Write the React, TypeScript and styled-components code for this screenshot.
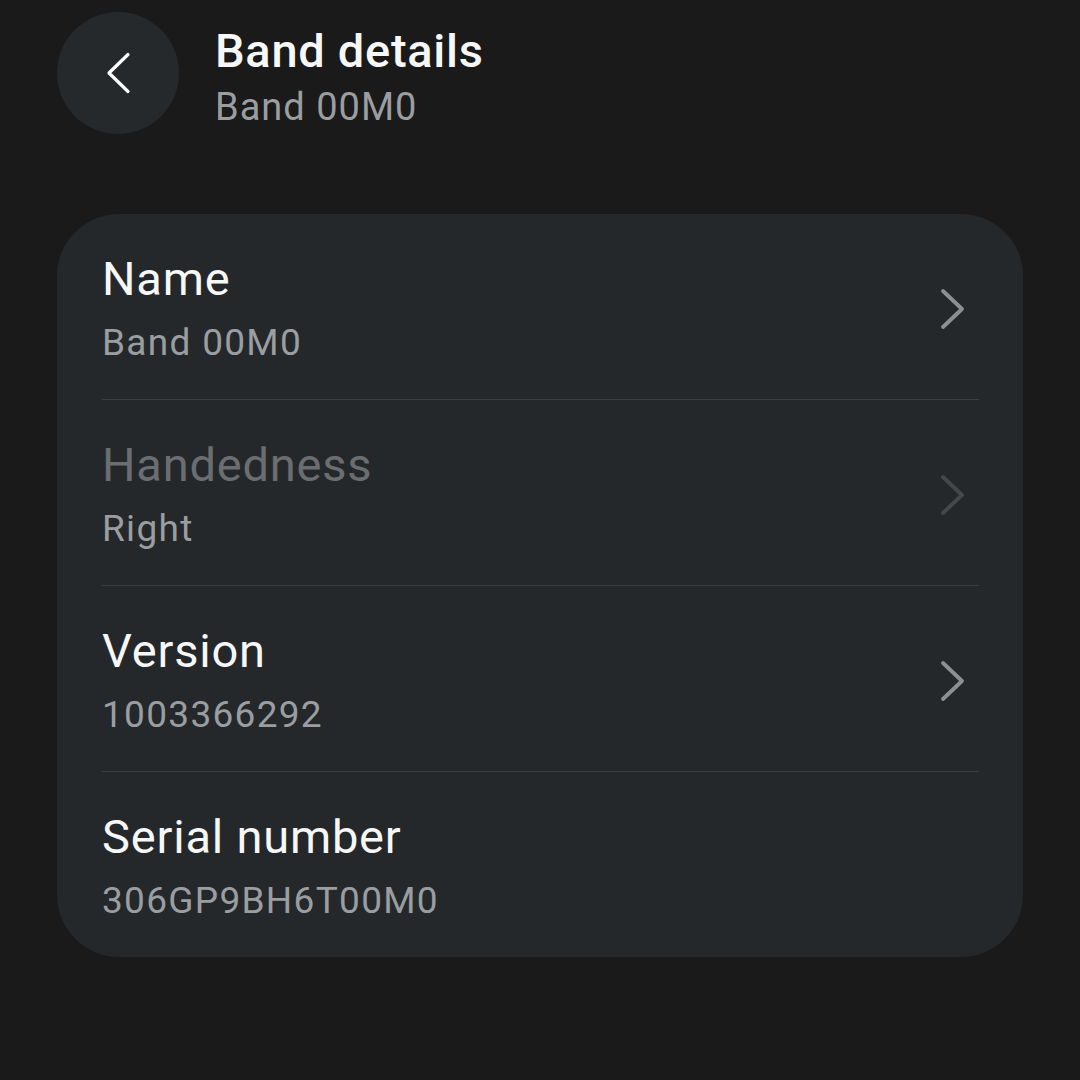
import React from 'react';
import styled, { createGlobalStyle } from 'styled-components';

const GlobalStyle = createGlobalStyle`
  html, body {
    margin: 0;
    padding: 0;
    background: #1a1a1a;
  }
  body {
    font-family: Roboto, 'Noto Sans', sans-serif;
    -webkit-font-smoothing: antialiased;
  }
`;

const Page = styled.div`
  width: 1080px;
  height: 1080px;
  box-sizing: border-box;
  padding: 12px 57px 0 57px;
  background: #1a1a1a;
`;

const Header = styled.div`
  display: flex;
  align-items: flex-start;
  gap: 36px;
`;

const BackButton = styled.button`
  width: 122px;
  height: 122px;
  border-radius: 50%;
  border: none;
  padding: 0;
  background: #26292c;
  display: flex;
  align-items: center;
  justify-content: center;
  cursor: pointer;
`;

const HeaderText = styled.div`
  display: flex;
  flex-direction: column;
  margin-top: 11px;
`;

const HeaderTitle = styled.div`
  font-size: 47px;
  line-height: 56px;
  font-weight: 500;
  letter-spacing: 0.7px;
  color: #f7f7f7;
`;

const HeaderSubtitle = styled.div`
  font-size: 38px;
  line-height: 48px;
  margin-top: 4px;
  letter-spacing: 1px;
  color: #9a9ea1;
`;

const Card = styled.div`
  margin-top: 80px;
  background: #25282b;
  border-radius: 62px;
  padding: 0 44px 0 45px;
`;

const Row = styled.div<{ $last?: boolean }>`
  display: flex;
  align-items: center;
  padding: 37px 0 32px;
  border-bottom: ${p => (p.$last ? 'none' : '1px solid #3b3e41')};
`;

const RowText = styled.div`
  flex: 1;
  display: flex;
  flex-direction: column;
`;

const RowTitle = styled.div<{ $disabled?: boolean }>`
  font-size: 47px;
  line-height: 56px;
  letter-spacing: 0.8px;
  color: ${p => (p.$disabled ? '#6b6e71' : '#f7f7f7')};
`;

const RowValue = styled.div`
  font-size: 37px;
  line-height: 48px;
  margin-top: 12px;
  letter-spacing: 1.3px;
  color: #9a9ea1;
`;

const Chevron = styled.svg`
  width: 26px;
  height: 42px;
  margin-right: 13px;
  flex-shrink: 0;
`;

const BackIcon = () => (
  <svg width="26" height="42" viewBox="0 0 26 42">
    <polyline
      points="23,2.5 4,21 23,39.5"
      fill="none"
      stroke="#ffffff"
      strokeWidth="3.2"
      strokeLinecap="round"
      strokeLinejoin="round"
    />
  </svg>
);

const ChevronRight = ({ disabled }: { disabled?: boolean }) => (
  <Chevron viewBox="0 0 26 42">
    <polyline
      points="3,3 22,21 3,39"
      fill="none"
      stroke={disabled ? '#45484b' : '#8d9093'}
      strokeWidth="3.8"
      strokeLinecap="round"
      strokeLinejoin="round"
    />
  </Chevron>
);

interface Item {
  title: string;
  value: string;
  disabled?: boolean;
  link?: boolean;
}

const items: Item[] = [
  { title: 'Name', value: 'Band 00M0', link: true },
  { title: 'Handedness', value: 'Right', disabled: true, link: true },
  { title: 'Version', value: '1003366292', link: true },
  { title: 'Serial number', value: '306GP9BH6T00M0' },
];

export default function App() {
  return (
    <>
      <GlobalStyle />
      <Page>
        <Header>
          <BackButton aria-label="Back">
            <BackIcon />
          </BackButton>
          <HeaderText>
            <HeaderTitle>Band details</HeaderTitle>
            <HeaderSubtitle>Band 00M0</HeaderSubtitle>
          </HeaderText>
        </Header>
        <Card>
          {items.map((item, i) => (
            <Row key={item.title} $last={i === items.length - 1}>
              <RowText>
                <RowTitle $disabled={item.disabled}>{item.title}</RowTitle>
                <RowValue>{item.value}</RowValue>
              </RowText>
              {item.link && <ChevronRight disabled={item.disabled} />}
            </Row>
          ))}
        </Card>
      </Page>
    </>
  );
}
